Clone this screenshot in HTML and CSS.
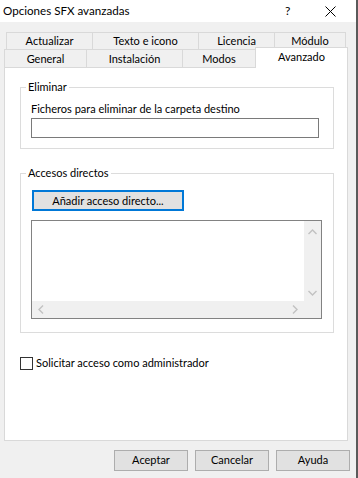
FILE: index.html
```html
<!DOCTYPE html>
<html lang="es">
<head>
  <meta charset="UTF-8" />
  <title>Opciones SFX avanzadas</title>
  <link rel="stylesheet" href="styles.css">
</head>
<body>
  <div class="window">
    <div class="titlebar">
      <span class="title">Opciones SFX avanzadas</span>
      <span class="help">?</span>
      <span class="close">
        <svg width="11" height="11" viewBox="0 0 11 11"><path d="M0.5 0.5 L10.5 10.5 M10.5 0.5 L0.5 10.5" stroke="#000" stroke-width="1" fill="none"/></svg>
      </span>
    </div>

    <div class="tabs">
      <div class="tab-row row-back">
        <div class="tab t-actualizar">Actualizar</div>
        <div class="tab t-texto">Texto e icono</div>
        <div class="tab t-licencia">Licencia</div>
        <div class="tab t-modulo">Módulo</div>
      </div>
      <div class="tab-row row-front">
        <div class="tab t-general">General</div>
        <div class="tab t-instalacion">Instalación</div>
        <div class="tab t-modos">Modos</div>
        <div class="tab t-avanzado active">Avanzado</div>
      </div>
    </div>

    <div class="panel">
      <fieldset class="group group-del">
        <legend>Eliminar</legend>
        <div class="field-label">Ficheros para eliminar de la carpeta destino</div>
        <div class="textbox"></div>
      </fieldset>

      <fieldset class="group group-links">
        <legend>Accesos directos</legend>
        <div class="btn btn-default">Añadir acceso directo...</div>
        <div class="listbox">
          <div class="list-area"></div>
          <div class="vscroll">
            <svg width="9" height="6" viewBox="0 0 9 6"><path d="M0.5 5 L4.5 1 L8.5 5" stroke="#c2c2c2" stroke-width="1.4" fill="none"/></svg>
            <svg width="9" height="6" viewBox="0 0 9 6"><path d="M0.5 1 L4.5 5 L8.5 1" stroke="#c2c2c2" stroke-width="1.4" fill="none"/></svg>
          </div>
          <div class="hscroll">
            <svg width="6" height="9" viewBox="0 0 6 9"><path d="M5 0.5 L1 4.5 L5 8.5" stroke="#c2c2c2" stroke-width="1.4" fill="none"/></svg>
            <svg width="6" height="9" viewBox="0 0 6 9"><path d="M1 0.5 L5 4.5 L1 8.5" stroke="#c2c2c2" stroke-width="1.4" fill="none"/></svg>
          </div>
          <div class="corner"></div>
        </div>
      </fieldset>

      <label class="check">
        <span class="check-box"></span>
        <span>Solicitar acceso como administrador</span>
      </label>
    </div>

    <div class="buttons">
      <div class="btn">Aceptar</div>
      <div class="btn">Cancelar</div>
      <div class="btn">Ayuda</div>
    </div>
  </div>
</body>
</html>
```

FILE: styles.css
```css
:root {
  --bg: #f0f0f0;
  --line: #d9d9d9;
  --text: #000000;
  --btn-bg: #e1e1e1;
  --btn-border: #adadad;
  --accent: #0078d7;
}

* {
  box-sizing: border-box;
}

body {
  margin: 0;
  font-family: Lato, "Noto Sans", sans-serif;
  font-size: 11px;
  line-height: 16px;
  color: var(--text);
  background: var(--bg);
}

.window {
  width: 358px;
  height: 478px;
  background: var(--bg);
  border-right: 2px solid #5a5a5a;
  overflow: hidden;
}

/* barra de titulo */
.titlebar {
  height: 22px;
  background: #ffffff;
  display: flex;
  align-items: center;
  padding-left: 3px;
}

.title {
  flex: 1;
  font-size: 11.6px;
}

.help {
  width: 37px;
  margin-right: 3px;
  font-size: 12px;
  text-align: left;
}

.close {
  width: 31px;
  display: flex;
  align-items: center;
}

/* pestañas */
.tabs {
  margin-top: 10px;
}

.tab-row {
  display: flex;
}

.row-back {
  height: 17px;
  margin-left: 6px;
}

.row-front {
  height: 18px;
  margin-left: 4px;
  align-items: flex-end;
}

.tab {
  height: 100%;
  border: 1px solid var(--line);
  border-bottom: none;
  margin-left: -1px;
  text-align: center;
  line-height: 16px;
  background: var(--bg);
}

.tab:first-child {
  margin-left: 0;
}

.row-front .tab {
  line-height: 17px;
}

.tab.active {
  height: 21px;
  margin-bottom: -1px;
  background: #ffffff;
  position: relative;
  z-index: 1;
  line-height: 17px;
}

.t-actualizar { width: 87px; }
.t-texto { width: 107px; }
.t-licencia { width: 77px; }
.t-modulo { width: 72px; }
.t-general { width: 83px; }
.t-instalacion { width: 97px; }
.t-modos { width: 74px; }
.t-avanzado { width: 93px; }

/* panel */
.panel {
  margin-left: 4px;
  width: 344px;
  height: 374px;
  background: #ffffff;
  border: 1px solid var(--line);
  padding: 11px 0 0 15px;
}

.group {
  width: 314px;
  margin: 0;
  border: 1px solid #dcdcdc;
  padding: 0 0 0 10px;
}

.group legend {
  padding: 0 2px;
  margin-left: -5px;
  line-height: 16px;
}

.group-del {
  padding-bottom: 10px;
}

.group-links {
  margin-top: 16px;
  padding-bottom: 13px;
}

.field-label {
  margin-top: 6px;
}

.textbox {
  margin-top: 1px;
  width: 288px;
  height: 20px;
  border: 1px solid #7a7a7a;
  background: #ffffff;
}

.btn {
  height: 21px;
  border: 1px solid var(--btn-border);
  background: var(--btn-bg);
  text-align: center;
  line-height: 18px;
}

.btn-default {
  width: 152px;
  margin: 9px 0 0 1px;
  border: 2px solid var(--accent);
  line-height: 17px;
}

.listbox {
  margin-top: 9px;
  width: 291px;
  height: 99px;
  border: 1px solid #828282;
  display: grid;
  grid-template-columns: 1fr 17px;
  grid-template-rows: 1fr 17px;
}

.list-area {
  background: #ffffff;
}

.vscroll,
.hscroll,
.corner {
  background: var(--bg);
}

.vscroll {
  display: flex;
  flex-direction: column;
  justify-content: space-between;
  align-items: center;
  padding: 8px 0 5px;
}

.hscroll {
  display: flex;
  justify-content: space-between;
  align-items: center;
  padding: 0 6px 0 6px;
}

/* casilla */
.check {
  display: flex;
  align-items: center;
  margin-top: 22px;
  gap: 3px;
}

.check-box {
  width: 13px;
  height: 13px;
  border: 1px solid #333333;
  background: #ffffff;
}

/* botones inferiores */
.buttons {
  display: flex;
  justify-content: flex-end;
  gap: 7px;
  margin-top: 9px;
  padding-right: 6px;
}

.buttons .btn {
  width: 74px;
}
```
